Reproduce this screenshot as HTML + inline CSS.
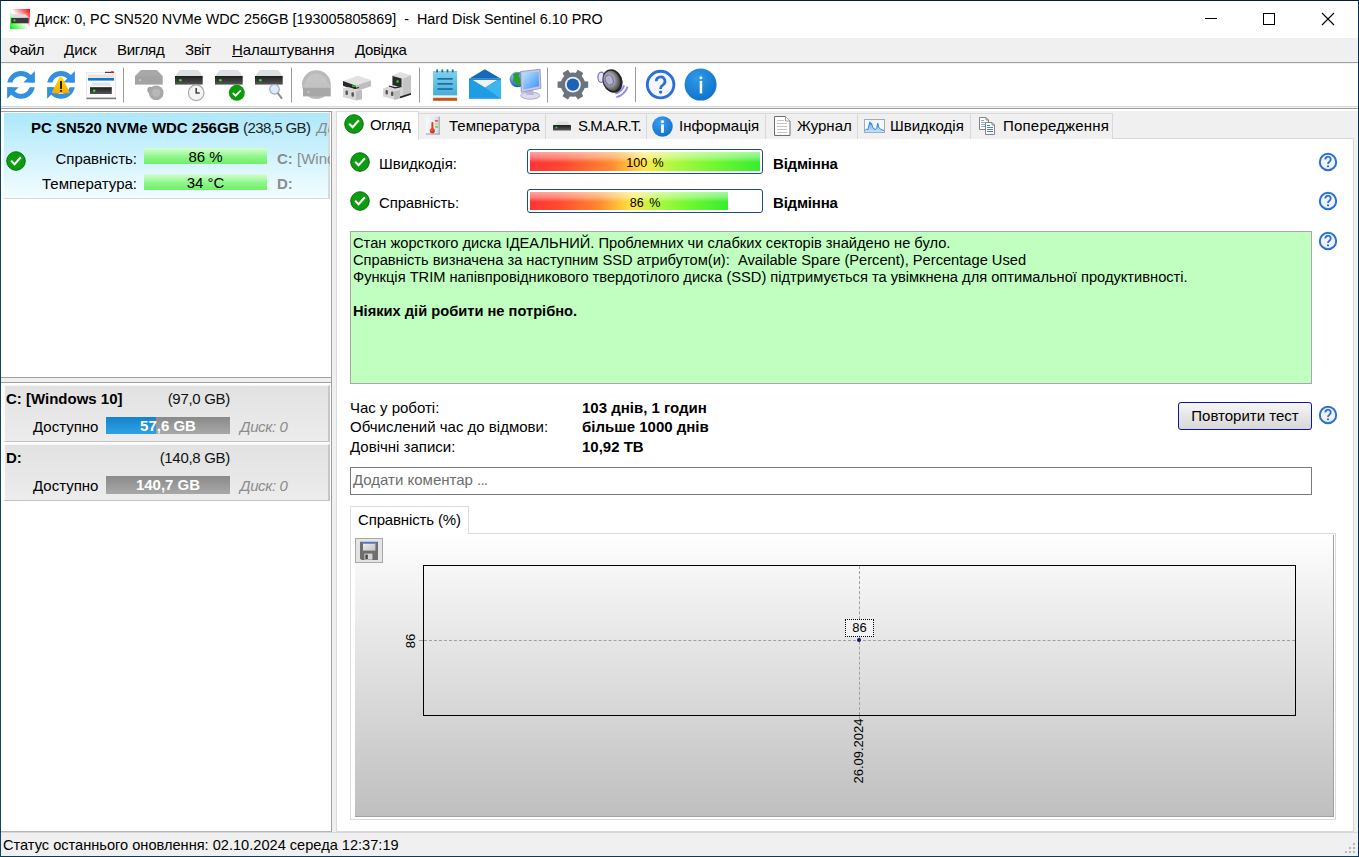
<!DOCTYPE html>
<html><head><meta charset="utf-8">
<style>
*{margin:0;padding:0;box-sizing:border-box}
html,body{width:1359px;height:857px;overflow:hidden;background:#f0f0f0}
body{position:relative;font-family:"Liberation Sans",sans-serif;font-size:15px;color:#000}
.a{position:absolute;white-space:pre;line-height:18px}
.b{font-weight:bold}
svg{position:absolute;overflow:visible}
</style></head><body>
<!-- title bar -->
<div class="a" style="left:1px;top:1px;width:1357px;height:37px;background:#fff"></div>
<div class="a" id="title" style="left:35px;top:10px;font-size:14.35px">Диск: 0, PC SN520 NVMe WDC 256GB [193005805869]  -  Hard Disk Sentinel 6.10 PRO</div>
<svg style="left:10px;top:9px" width="20" height="20" viewBox="0 0 20 20"><defs><linearGradient id="tg" x1="1" y1="0" x2="0" y2="1"><stop offset="0" stop-color="#ff0000"/><stop offset=".5" stop-color="#ffffff"/><stop offset="1" stop-color="#00f000"/></linearGradient></defs><rect width="20" height="20" fill="url(#tg)"/><path d="M4 5.2h11.5l3 3.6h-17.3z" fill="#dcdde0"/><rect x="1.2" y="8.9" width="17.5" height="5.4" fill="#3a3a3a"/><circle cx="4.5" cy="11.4" r="1.1" fill="#30e030"/></svg>
<div class="a" style="left:1205px;top:18px;width:12px;height:1px;background:#000"></div>
<div class="a" style="left:1263px;top:13px;width:12px;height:12px;border:1px solid #000"></div>
<svg style="left:1322px;top:13px" width="12" height="12" viewBox="0 0 12 12"><path d="M0 0L12 12M12 0L0 12" stroke="#000" stroke-width="1.1"/></svg>

<!-- menu -->
<div class="a" style="left:1px;top:38px;width:1357px;height:25px;background:#f0f0f0;border-bottom:1px solid #a0a0a0"></div>
<div class="a" style="left:9px;top:41px;letter-spacing:-0.45px">Файл</div>
<div class="a" style="left:64px;top:41px">Диск</div>
<div class="a" style="left:117px;top:41px;letter-spacing:-0.3px">Вигляд</div>
<div class="a" style="left:185px;top:41px;letter-spacing:-0.4px">Звіт</div>
<div class="a" style="left:232px;top:41px;letter-spacing:-0.1px"><u>Н</u>алаштування</div>
<div class="a" style="left:355px;top:41px;letter-spacing:-0.35px">Довідка</div>
<!-- toolbar -->
<div class="a" style="left:1px;top:64px;width:1357px;height:42px;background:#fff"></div>
<div class="a" style="left:1px;top:106px;width:1357px;height:5px;border-top:1px solid #d9d9d9;background:#fff"></div><div class="a" style="left:1px;top:107px;width:1357px;height:1px;background:#f0f0f0"></div><div class="a" style="left:1px;top:108px;width:1357px;height:1px;background:#a0a0a0"></div>

<svg style="left:0;top:0" width="1359" height="110" viewBox="0 0 1359 110"><defs>
<clipPath id="rc"><rect x="-2" y="-2" width="32" height="13.6"/><rect x="-2" y="16.2" width="32" height="14"/></clipPath>
<linearGradient id="dk" x1="0" y1="0" x2="0" y2="1"><stop offset="0" stop-color="#1e1e1e"/><stop offset="1" stop-color="#555"/></linearGradient>
<linearGradient id="wy" x1="0" y1="0" x2="0" y2="1"><stop offset="0" stop-color="#ffe000"/><stop offset="1" stop-color="#f5a800"/></linearGradient>
<linearGradient id="nb" x1="0" y1="0" x2="0" y2="1"><stop offset="0" stop-color="#7fd0f0"/><stop offset="1" stop-color="#44aedc"/></linearGradient>
<radialGradient id="gl" cx="0.35" cy="0.3" r="0.8"><stop offset="0" stop-color="#8fd0ff"/><stop offset="1" stop-color="#1040b0"/></radialGradient>
<linearGradient id="mn" x1="0" y1="0" x2="1" y2="1"><stop offset="0" stop-color="#bfe6ff"/><stop offset="1" stop-color="#3a90f0"/></linearGradient>
<radialGradient id="ib" cx="0.4" cy="0.3" r="0.8"><stop offset="0" stop-color="#2f9ae8"/><stop offset="1" stop-color="#0b6ec8"/></radialGradient>
<radialGradient id="sp" cx="0.4" cy="0.4" r="0.65"><stop offset="0" stop-color="#e8e8e8"/><stop offset="0.5" stop-color="#9a9a9a"/><stop offset="1" stop-color="#404040"/></radialGradient>
</defs><g transform="translate(7 71)"><circle cx="14" cy="13.9" r="11.45" stroke="#3190e0" stroke-width="4.9" fill="none" clip-path="url(#rc)"/><path d="M27.9 0V11.6H16.3z" fill="#3190e0"/><path d="M0.1 27.8V16.2H11.7z" fill="#3190e0"/></g><g transform="translate(47 71)"><circle cx="14" cy="13.9" r="11.45" stroke="#3190e0" stroke-width="4.9" fill="none" clip-path="url(#rc)"/><path d="M27.9 0V11.6H16.3z" fill="#3190e0"/><path d="M0.1 27.8V16.2H11.7z" fill="#3190e0"/></g><path d="M60.8 76.3c.5 0 .8.3 1.1.8l7.6 14.6c.4.8 0 1.6-.9 1.6h-15.6c-.9 0-1.3-.8-.9-1.6l7.6-14.6c.3-.5.6-.8 1.1-.8z" fill="url(#wy)"/><rect x="60.1" y="81" width="1.8" height="7.9" fill="#111"/><rect x="60.1" y="90.1" width="1.8" height="1.6" fill="#111"/><rect x="86.5" y="72.5" width="29" height="26" fill="#fbfbfb" stroke="#e4e4e4" stroke-width="0.8"/><rect x="86.5" y="97.6" width="29.5" height="1.6" fill="#7a7a7a"/><rect x="105" y="71.8" width="7" height="1.2" fill="#444"/><rect x="111" y="71.3" width="3" height="1.8" fill="#e02020"/><rect x="88" y="74.5" width="26" height="3.3" fill="#eae3dc"/><rect x="88" y="78" width="26" height="2.6" fill="#0a7ad8"/><path d="M92.5 82.8h17l1.5 2.9h-20z" fill="#e2e4e6"/><rect x="90" y="87.2" width="21.8" height="6.8" fill="url(#dk)"/><circle cx="94.2" cy="90.8" r="1.3" fill="#2fe02f"/><rect x="123" y="67.5" width="1" height="35" fill="#9a9a9a"/><path d="M141 70h15.8l5.9 6h-27.7z" fill="#a8a8a8"/><rect x="135" y="76" width="27.7" height="8.6" fill="#a3a3a3"/><circle cx="140" cy="80.2" r="1.1" fill="#c8c8c8"/><circle cx="150.5" cy="89.9" r="3.2" fill="#a0a0a0"/><circle cx="156.2" cy="92.8" r="7.4" fill="#a9a9a9"/><circle cx="156.2" cy="92.8" r="4" fill="#b8b8b8"/><path d="M179.8 70h18.2l4.7 6h-27.7z" fill="#dedfe2"/><rect x="175" y="76" width="27.7" height="8.6" fill="url(#dk)"/><circle cx="180.4" cy="80.2" r="1.3" fill="#2fe02f"/><circle cx="196.2" cy="92.8" r="7.8" fill="#f4f4f4" stroke="#a8a8a8" stroke-width="1.2"/><path d="M196.2 88v5h3.5" stroke="#444" stroke-width="1.6" fill="none"/><path d="M219.8 70h18.2l4.7 6h-27.7z" fill="#dedfe2"/><rect x="215" y="76" width="27.7" height="8.6" fill="url(#dk)"/><circle cx="220.4" cy="80.2" r="1.3" fill="#2fe02f"/><circle cx="236.8" cy="92.8" r="8" fill="#0a9a0a"/><path d="M232.8 93l2.8 2.7 5.3-5.3" stroke="#fff" stroke-width="1.8" fill="none"/><path d="M259.8 70h18.2l4.7 6h-27.7z" fill="#dedfe2"/><rect x="255" y="76" width="27.7" height="8.6" fill="url(#dk)"/><circle cx="260.4" cy="80.2" r="1.3" fill="#2fe02f"/><circle cx="274.5" cy="89.3" r="4.8" fill="#dcebff" stroke="#9ab" stroke-width="1.2"/><path d="M277.6 93l4.4 5.6" stroke="#8a8a8a" stroke-width="2"/><rect x="291" y="67.5" width="1" height="35" fill="#9a9a9a"/><circle cx="316.4" cy="84.6" r="14.4" fill="#b9b9b9"/><circle cx="316.4" cy="84.6" r="11" fill="#c4c4c4"/><path d="M306 81.8h21l3.8 6h-28.6z" fill="#c2c2c2"/><rect x="303" y="87.8" width="27.8" height="8.6" fill="#a7a7a7"/><circle cx="308.5" cy="92" r="1.1" fill="#c8c8c8"/><path d="M343 81l15-5.2 13 4.3v6l-15 5z" fill="#e2e2e2"/><path d="M343 81v4.8l13 5v-5z" fill="#2a2a2a"/><path d="M356 85.6l15-5v5.6l-15 5z" fill="#bdbdbd"/><rect x="352" y="85.4" width="4" height="1.4" fill="#2fd02f"/><path d="M343 88.5l6-1.6 13 3.5v9l-6 1-13-3.4z" fill="#d6d6d6"/><path d="M356 91.2l6-1.2v9l-6 1z" fill="#bdbdbd"/><rect x="345.5" y="90.6" width="2.4" height="4.5" rx="1" fill="#555"/><rect x="351.5" y="92.2" width="2.4" height="4.5" rx="1" fill="#555"/><path d="M349 86.5l6 2 4-1" stroke="#222" stroke-width="1.2" fill="none"/><path d="M392 75.5l8-3.5 11 3.3v19l-8 3.5-11-3.3z" fill="#e0e0e0"/><path d="M392 75.5l11 3.3v19l-11-3.3z" fill="#d4d4d4"/><path d="M392.5 76v9l9 2.5v-9z" fill="#2a2a2a"/><rect x="396.5" y="80.4" width="2.2" height="2.2" fill="#2fe02f"/><path d="M403 78.8l8-3.5v19l-8 3.5z" fill="#c4c4c4"/><path d="M383 88.5l6-2 11 3v8.5l-6 1.5-11-3z" fill="#d8d8d8"/><path d="M394 91.5l6-1.5v8.5l-6 1.5z" fill="#bdbdbd"/><rect x="385.5" y="90" width="2.4" height="4.5" rx="1" fill="#555"/><rect x="391" y="91.6" width="2.4" height="4.5" rx="1" fill="#555"/><path d="M400 96.5l11-3.5v1.8l-11 3.5z" fill="#222"/><path d="M389 86l6 1.8 5-1" stroke="#222" stroke-width="1.2" fill="none"/><rect x="419" y="67.5" width="1" height="35" fill="#9a9a9a"/><rect x="433.1" y="71" width="24" height="24.6" fill="url(#nb)"/><g fill="#1d6e96"><rect x="436.2" y="69.3" width="1.8" height="3.3" rx=".8"/><rect x="441.4" y="69.3" width="1.8" height="3.3" rx=".8"/><rect x="446.6" y="69.3" width="1.8" height="3.3" rx=".8"/><rect x="451.8" y="69.3" width="1.8" height="3.3" rx=".8"/><rect x="437.4" y="78" width="15.3" height="1.7"/><rect x="437.4" y="83" width="15.3" height="1.7"/><rect x="437.4" y="88.2" width="15.3" height="1.7"/></g><rect x="433.1" y="95.6" width="24" height="2" fill="#f2f2f2"/><rect x="433.1" y="97.8" width="24" height="3" fill="#c4581c"/><path d="M469 78.8l15.8-9.5 16.2 9.5z" fill="#1668b8"/><rect x="469" y="78.8" width="32" height="20" fill="#1f9ce2"/><path d="M485 87.4L501 78.8V98.8z" fill="#3cb6ef"/><path d="M472 79.5h26l-13 8z" fill="#f2f2f2"/><path d="M469 78.8h32v1.2h-32z" fill="#2a8ad0"/><circle cx="517.5" cy="79.5" r="7.8" fill="url(#gl)"/><path d="M513 74c2-1 4-1.5 6-1 1 1-1 2.5 0 4s3 1 3 3-2 3-2 5l-1.5 2c-1-2-1-3-2.5-4s-3 0-3-2 1-4 0-7z" fill="#2aa02a"/><ellipse cx="530.3" cy="95.6" rx="9.5" ry="3.6" fill="#dcdcf0" stroke="#9a9ac8" stroke-width=".8"/><path d="M527 89.5h6l1 5.5h-8z" fill="#b8b8d8"/><path d="M520.6 71.5l19.5-2.2 0.8 19-19.6 4z" fill="#c8c8ec" stroke="#8c8cc0" stroke-width=".8"/><path d="M522.8 73.3l15.8-1.8.6 14.8-15.8 3.3z" fill="url(#mn)"/><rect x="547" y="67.5" width="1" height="35" fill="#9a9a9a"/><path d="M583.98 81.17 L588.19 81.50 L588.19 87.70 L583.98 88.03 L581.41 92.48 L583.23 96.29 L577.86 99.39 L575.47 95.91 L570.33 95.91 L567.94 99.39 L562.57 96.29 L564.39 92.48 L561.82 88.03 L557.61 87.70 L557.61 81.50 L561.82 81.17 L564.39 76.72 L562.57 72.91 L567.94 69.81 L570.33 73.29 L575.47 73.29 L577.86 69.81 L583.23 72.91 L581.41 76.72z" fill="#6b737d" transform="rotate(0 572.9 84.6)"/><circle cx="572.9" cy="84.6" r="12.2" fill="#6b737d"/><circle cx="572.9" cy="84.6" r="7.9" fill="#f0f2f4"/><circle cx="572.9" cy="84.6" r="6.2" fill="#1a63b8"/><path d="M624.2 85.4A13 13 0 0 1 615.4 93.6M627.6 86.6A16.5 16.5 0 0 1 616.3 97.2" stroke="#8f88e6" stroke-width="1.8" fill="none"/><ellipse cx="601.3" cy="77.3" rx="3.4" ry="5.2" fill="#e4e4f4" stroke="#6e66cc" stroke-width="1.1"/><ellipse cx="612.5" cy="81" rx="9.8" ry="12" transform="rotate(-22 612.5 81)" fill="#262626"/><ellipse cx="611.8" cy="80.7" rx="8.2" ry="10.3" transform="rotate(-22 611.8 80.7)" fill="url(#sp)"/><ellipse cx="609.3" cy="80" rx="3.8" ry="5.2" transform="rotate(-22 609.3 80)" fill="#b4b4c2" stroke="#6a62c8" stroke-width="1"/><rect x="635" y="67" width="1" height="35" fill="#9a9a9a"/><circle cx="660.6" cy="84.6" r="13.3" fill="#f4f8fe" stroke="#2d6fd4" stroke-width="2.9"/><path d="M656.2 81.3a4.4 4.4 0 1 1 6.6 3.8c-1.6.9-2.2 1.6-2.2 3.4v.6" stroke="#2d6fd4" stroke-width="2.7" fill="none"/><circle cx="660.6" cy="92.1" r="1.7" fill="#2d6fd4"/><circle cx="700.6" cy="84.6" r="16" fill="url(#ib)"/><circle cx="700.9" cy="77.8" r="1.5" fill="#fff"/><rect x="699.7" y="80.9" width="2.5" height="12.5" fill="#fff"/></svg>
<!-- left panel -->
<div class="a" style="left:1px;top:111px;width:331px;height:267px;background:#fff;border-top:1px solid #a0a0a0;border-right:1px solid #a0a0a0;border-bottom:1px solid #a0a0a0"></div>
<div class="a" style="left:1px;top:382px;width:331px;height:450px;background:#fff;border-top:1px solid #a0a0a0;border-right:1px solid #a0a0a0;border-bottom:1px solid #b4b4b4"></div><div class="a" style="left:331px;top:378px;width:1px;height:4px;background:#a0a0a0"></div>


<!-- disk card -->
<div class="a" style="left:3px;top:112px;width:327px;height:87px;background:linear-gradient(#ace7fa,#c8f0fc 40%,#e6f9ff 80%,#f2fdff);border:1px solid #f4fdff;border-right:2px solid #cfdce2;border-bottom:1px solid #d8d8d8"></div>
<div class="a b" style="left:31px;top:119px">PC SN520 NVMe WDC 256GB</div>
<div class="a" style="left:243px;top:119px;color:#222;letter-spacing:-0.6px">(238,5 GB)</div>
<div class="a" style="left:0;top:112px;width:329px;height:30px;overflow:hidden"><div class="a" style="left:317px;top:7px;font-style:italic;color:#8c8c8c">Диск: 0</div></div>
<svg style="left:6px;top:151px" width="20" height="20" viewBox="0 0 20 20"><circle cx="10" cy="10" r="9.3" fill="#0c9c10" stroke="#056405" stroke-width="0.9"/><path d="M5.2 9.8l3.4 3.5 6.3-7" stroke="#fff" stroke-width="2.1" fill="none"/></svg>
<div class="a" style="left:0;top:150px;width:137px;text-align:right">Справність:</div>
<div class="a" style="left:144px;top:148px;width:123px;height:16px;background:linear-gradient(#d6ffd2,#8ef58a 55%,#6ff06a)"></div>
<div class="a" style="left:144px;top:148px;width:123px;text-align:center;line-height:17px">86 %</div>
<div class="a" style="left:0;top:142px;width:330px;height:50px;overflow:hidden"><div class="a b" style="left:277px;top:8px;color:#8c8c8c">C:<span style="font-weight:normal"> [Windows 10]</span></div><div class="a b" style="left:277px;top:33px;color:#8c8c8c">D:</div></div>
<div class="a" style="left:0;top:175px;width:137px;text-align:right">Температура:</div>
<div class="a" style="left:144px;top:174px;width:123px;height:16px;background:linear-gradient(#d6ffd2,#8ef58a 55%,#6ff06a)"></div>
<div class="a" style="left:144px;top:174px;width:123px;text-align:center;line-height:17px">34 °C</div>

<!-- volumes -->
<div class="a" style="left:3px;top:385px;width:327px;height:57px;background:linear-gradient(#e2e2e2,#ececec);border-left:2px solid #fbfbfb;border-top:1px solid #f6f6f6;border-right:2px solid #c6c6c6;border-bottom:1px solid #c4c4c4"></div>
<div class="a b" style="left:6px;top:390px">C: [Windows 10]</div>
<div class="a" style="left:100px;top:390px;width:130px;text-align:right;color:#111;letter-spacing:-0.3px">(97,0 GB)</div>
<div class="a" style="left:33px;top:418px">Доступно</div>
<div class="a" style="left:106px;top:417px;width:124px;height:17px;background:linear-gradient(#8a8a8a,#a8a8a8)"></div>
<div class="a" style="left:106px;top:417px;width:50px;height:17px;background:linear-gradient(#1684cc,#2ea2e4)"></div>
<div class="a b" style="left:106px;top:417px;width:124px;height:18px;text-align:center;color:#fff;line-height:18px">57,6 GB</div>
<div class="a" style="left:240px;top:418px;font-style:italic;color:#8c8c8c;letter-spacing:-0.4px">Диск: 0</div>

<div class="a" style="left:3px;top:444px;width:327px;height:57px;background:linear-gradient(#e2e2e2,#ececec);border-left:2px solid #fbfbfb;border-top:1px solid #f6f6f6;border-right:2px solid #c6c6c6;border-bottom:1px solid #c4c4c4"></div>
<div class="a b" style="left:6px;top:449px">D:</div>
<div class="a" style="left:100px;top:449px;width:130px;text-align:right;color:#111;letter-spacing:-0.3px">(140,8 GB)</div>
<div class="a" style="left:33px;top:477px">Доступно</div>
<div class="a" style="left:106px;top:476px;width:124px;height:18px;background:linear-gradient(#8a8a8a,#a8a8a8)"></div>
<div class="a b" style="left:106px;top:476px;width:124px;height:18px;text-align:center;color:#fff;line-height:18px">140,7 GB</div>
<div class="a" style="left:240px;top:477px;font-style:italic;color:#8c8c8c;letter-spacing:-0.4px">Диск: 0</div>

<!-- right panel -->
<div class="a" style="left:336px;top:138px;width:1018px;height:694px;background:#fff;border:1px solid #d9d9d9"></div>


<!-- tabs -->
<div class="a" style="left:418px;top:113px;width:128px;height:26px;background:#f0f0f0;border:1px solid #d9d9d9;border-bottom:none"></div>
<div class="a" style="left:546px;top:113px;width:101px;height:26px;background:#f0f0f0;border:1px solid #d9d9d9;border-left:none;border-bottom:none"></div>
<div class="a" style="left:647px;top:113px;width:119px;height:26px;background:#f0f0f0;border:1px solid #d9d9d9;border-left:none;border-bottom:none"></div>
<div class="a" style="left:766px;top:113px;width:92px;height:26px;background:#f0f0f0;border:1px solid #d9d9d9;border-left:none;border-bottom:none"></div>
<div class="a" style="left:858px;top:113px;width:113px;height:26px;background:#f0f0f0;border:1px solid #d9d9d9;border-left:none;border-bottom:none"></div>
<div class="a" style="left:971px;top:113px;width:142px;height:26px;background:#f0f0f0;border:1px solid #d9d9d9;border-left:none;border-bottom:none"></div>
<div class="a" style="left:336px;top:111px;width:83px;height:29px;background:#fff;border:1px solid #d9d9d9;border-bottom:none"></div>


<!-- tab labels -->
<svg style="left:344px;top:114px" width="20" height="20" viewBox="0 0 20 20"><circle cx="10" cy="10" r="9.3" fill="#0c9c10" stroke="#056405" stroke-width="0.9"/><path d="M5.2 9.8l3.4 3.5 6.3-7" stroke="#fff" stroke-width="2.1" fill="none"/></svg>
<div class="a" style="left:370px;top:116px;letter-spacing:-0.4px">Огляд</div>
<svg style="left:425px;top:116px" width="16" height="19" viewBox="0 0 16 19"><defs><linearGradient id="th" x1="0" x2="1"><stop offset="0" stop-color="#f6f9fc"/><stop offset=".6" stop-color="#e4ebf3"/><stop offset="1" stop-color="#d0d8e2"/></linearGradient><radialGradient id="bl" cx=".4" cy=".35" r=".7"><stop offset="0" stop-color="#ff6040"/><stop offset="1" stop-color="#c01008"/></radialGradient></defs><rect x="0.8" y="0.5" width="14" height="18" fill="url(#th)"/><rect x="13.6" y="0.8" width="1.3" height="17.8" fill="#a9b1be"/><rect x="0.8" y="17.4" width="14" height="1.2" fill="#a0a8b4"/><rect x="6.4" y="6" width="2" height="9" rx="1" fill="#f03a20"/><circle cx="7.3" cy="14.8" r="2.5" fill="url(#bl)"/><rect x="9.9" y="4" width="3.3" height="1.7" rx=".7" fill="#e25a5a"/><rect x="9.9" y="7" width="3.3" height="1.7" rx=".7" fill="#e2d84a"/><rect x="9.9" y="10.1" width="3.3" height="1.7" rx=".7" fill="#5ad85a"/></svg>
<div class="a" style="left:449px;top:117px">Температура</div>
<svg style="left:553px;top:121px" width="18" height="10" viewBox="0 0 18 10"><defs><linearGradient id="sd" x1="0" y1="0" x2="0" y2="1"><stop offset="0" stop-color="#1e1e1e"/><stop offset="1" stop-color="#5a5a5a"/></linearGradient></defs><path d="M5.5 0.4h8.5l3.6 3.8h-17.4z" fill="#dedfe2"/><rect x="0" y="4.1" width="18" height="5.5" rx=".6" fill="url(#sd)"/><circle cx="3.4" cy="6.4" r=".9" fill="#30e030"/></svg>
<div class="a" style="left:578px;top:117px;letter-spacing:-0.9px">S.M.A.R.T.</div>
<svg style="left:652px;top:116px" width="21" height="21" viewBox="0 0 20 20"><defs><radialGradient id="ig" cx="0.4" cy="0.3" r="0.8"><stop offset="0" stop-color="#3aa0f0"/><stop offset="1" stop-color="#0c6cc8"/></radialGradient></defs><circle cx="10" cy="10" r="9.8" fill="url(#ig)"/><circle cx="10" cy="5.3" r="1.5" fill="#fff"/><rect x="8.7" y="8" width="2.6" height="8" fill="#fff"/></svg>
<div class="a" style="left:679px;top:117px">Інформація</div>
<svg style="left:774px;top:116px" width="17" height="20" viewBox="0 0 17 20"><path d="M0.5 0.5h11l4.5 4.5v14.5h-15.5z" fill="#fff" stroke="#6e6e6e" stroke-width="1"/><path d="M11.5 0.5v4.5h4.5" fill="#f4f4f4" stroke="#8a8a8a" stroke-width="0.8"/><path d="M3 4.5h7M3 7.5h10M3 10.5h10M3 13.5h10M3 16.5h10" stroke="#c4c4c4" stroke-width="1"/></svg>
<div class="a" style="left:797px;top:117px">Журнал</div>
<svg style="left:864px;top:119px" width="21" height="14" viewBox="0 0 21 14"><defs><linearGradient id="pa" x1="0" y1="0" x2="0" y2="1"><stop offset="0" stop-color="#5ab0f4"/><stop offset="1" stop-color="#c4e4fa"/></linearGradient></defs><rect x="0.5" y="0.5" width="20" height="13" fill="#f4f8fb" stroke="#a0acb8"/><path d="M1 11.5 2.5 10 4 10.5 5 6 5.8 2.8 6.8 5.5 7.6 4.2 8.6 8 10 10 11.5 10.5 12.8 8.5 13.8 4.2 14.8 8.5 16.5 10 18 10.8 20 11.5V13H1z" fill="url(#pa)"/><path d="M1 11.5 2.5 10 4 10.5 5 6 5.8 2.8 6.8 5.5 7.6 4.2 8.6 8 10 10 11.5 10.5 12.8 8.5 13.8 4.2 14.8 8.5 16.5 10 18 10.8 20 11.5" stroke="#2a7ad6" stroke-width="0.9" fill="none"/></svg>
<div class="a" style="left:890px;top:117px">Швидкодія</div>
<svg style="left:979px;top:117px" width="17" height="18" viewBox="0 0 17 18"><path d="M0.5 0.5h6.5l2.5 2.5v9.5h-9z" fill="#fff" stroke="#858585" stroke-width="1"/><path d="M7 0.5v2.5h2.5" fill="none" stroke="#858585" stroke-width="1"/><path d="M2 3.5h3M2 5.5h5.5M2 7.5h5.5M2 9.5h5.5" stroke="#86a6ea" stroke-width="1"/><path d="M6.5 5.5h6.5l2.5 2.5v9.5h-9z" fill="#fff" stroke="#858585" stroke-width="1"/><path d="M13 5.5v2.5h2.5" fill="none" stroke="#858585" stroke-width="1"/><path d="M8 8.5h3M8 10.5h6M8 12.5h6M8 14.5h6" stroke="#3f7de2" stroke-width="1"/></svg>
<div class="a" style="left:1003px;top:117px;letter-spacing:0.2px">Попередження</div>


<!-- health rows -->
<svg style="left:350px;top:152px" width="20" height="20" viewBox="0 0 20 20"><circle cx="10" cy="10" r="9.3" fill="#0c9c10" stroke="#056405" stroke-width="0.9"/><path d="M5.2 9.8l3.4 3.5 6.3-7" stroke="#fff" stroke-width="2.1" fill="none"/></svg>
<div class="a" style="left:379px;top:155px">Швидкодія:</div>
<div class="a" style="left:527px;top:149px;width:236px;height:25px;border:1px solid #1e4a88;border-radius:3px;background:#fff"></div>
<div class="a" style="left:530px;top:152px;width:230px;height:19px;background:linear-gradient(90deg,#ff3434 0%,#ff4a30 15%,#ff8a30 35%,#ffe840 50%,#b0f840 62%,#70f830 80%,#38ec30 100%)"></div>
<div class="a" style="left:530px;top:152px;width:230px;height:19px;background:linear-gradient(rgba(255,255,255,.55),rgba(255,255,255,.35) 30%,rgba(255,255,255,0) 55%)"></div>
<div class="a" style="left:527px;top:154px;width:236px;text-align:center;font-size:12.5px;word-spacing:2px">100 %</div>
<div class="a b" style="left:773px;top:155px;letter-spacing:-0.2px">Відмінна</div>
<svg style="left:1318px;top:152px" width="20" height="20" viewBox="0 0 20 20"><circle cx="10" cy="10" r="8.2" fill="#f0f4fa" stroke="#2c6fd8" stroke-width="2"/><path d="M7.3 7.4a2.7 2.7 0 1 1 4.1 2.3c-.9.6-1.4 1.1-1.4 2.3" stroke="#2c6fd8" stroke-width="1.9" fill="none"/><circle cx="10" cy="14.3" r="1.15" fill="#2c6fd8"/></svg>

<svg style="left:350px;top:191px" width="20" height="20" viewBox="0 0 20 20"><circle cx="10" cy="10" r="9.3" fill="#0c9c10" stroke="#056405" stroke-width="0.9"/><path d="M5.2 9.8l3.4 3.5 6.3-7" stroke="#fff" stroke-width="2.1" fill="none"/></svg>
<div class="a" style="left:379px;top:194px;letter-spacing:-0.15px">Справність:</div>
<div class="a" style="left:527px;top:189px;width:236px;height:24px;border:1px solid #1e4a88;border-radius:3px;background:#fff"></div>
<div class="a" style="left:530px;top:192px;width:198px;height:18px;background:linear-gradient(90deg,#ff3434 0%,#ff4a30 15%,#ff8a30 35%,#ffe840 52%,#b0f840 64%,#70f830 80%,#38ec30 100%)"></div>
<div class="a" style="left:530px;top:192px;width:198px;height:18px;background:linear-gradient(rgba(255,255,255,.55),rgba(255,255,255,.35) 30%,rgba(255,255,255,0) 55%)"></div>
<div class="a" style="left:527px;top:194px;width:236px;text-align:center;font-size:12.5px;word-spacing:2px">86 %</div>
<div class="a b" style="left:773px;top:194px;letter-spacing:-0.2px">Відмінна</div>
<svg style="left:1318px;top:191px" width="20" height="20" viewBox="0 0 20 20"><circle cx="10" cy="10" r="8.2" fill="#f0f4fa" stroke="#2c6fd8" stroke-width="2"/><path d="M7.3 7.4a2.7 2.7 0 1 1 4.1 2.3c-.9.6-1.4 1.1-1.4 2.3" stroke="#2c6fd8" stroke-width="1.9" fill="none"/><circle cx="10" cy="14.3" r="1.15" fill="#2c6fd8"/></svg>

<!-- message box -->
<div class="a" style="left:350px;top:231px;width:962px;height:153px;background:#c0ffc0;border:1px solid #a8a8a8"></div>
<div class="a" style="left:353px;top:235px;font-size:14.67px;line-height:17px">Стан жорсткого диска ІДЕАЛЬНИЙ. Проблемних чи слабких секторів знайдено не було.
Справність визначена за наступним SSD атрибутом(и):  Available Spare (Percent), Percentage Used
Функція TRIM напівпровідникового твердотілого диска (SSD) підтримується та увімкнена для оптимальної продуктивності.

<b>Ніяких дій робити не потрібно.</b></div>
<svg style="left:1318px;top:231px" width="20" height="20" viewBox="0 0 20 20"><circle cx="10" cy="10" r="8.2" fill="#f0f4fa" stroke="#2c6fd8" stroke-width="2"/><path d="M7.3 7.4a2.7 2.7 0 1 1 4.1 2.3c-.9.6-1.4 1.1-1.4 2.3" stroke="#2c6fd8" stroke-width="1.9" fill="none"/><circle cx="10" cy="14.3" r="1.15" fill="#2c6fd8"/></svg>

<!-- info rows -->
<div class="a" style="left:350px;top:398px;line-height:19.25px">Час у роботі:
Обчислений час до відмови:
Довічні записи:</div>
<div class="a b" style="left:582px;top:398px;line-height:19.25px">103 днів, 1 годин
більше 1000 днів
10,92 TB</div>
<div class="a" style="left:1178px;top:402px;width:134px;height:28px;border:1px solid #0a1a8a;border-radius:3px;background:linear-gradient(#f6f6f6,#e6e6e6 50%,#d8d8d8)"></div>
<div class="a" style="left:1178px;top:407px;width:134px;text-align:center">Повторити тест</div>
<svg style="left:1318px;top:405px" width="20" height="20" viewBox="0 0 20 20"><circle cx="10" cy="10" r="8.2" fill="#f0f4fa" stroke="#2c6fd8" stroke-width="2"/><path d="M7.3 7.4a2.7 2.7 0 1 1 4.1 2.3c-.9.6-1.4 1.1-1.4 2.3" stroke="#2c6fd8" stroke-width="1.9" fill="none"/><circle cx="10" cy="14.3" r="1.15" fill="#2c6fd8"/></svg>

<!-- comment -->
<div class="a" style="left:350px;top:467px;width:962px;height:28px;border:1px solid #7a7a7a;background:#fff"></div>
<div class="a" style="left:353px;top:471px;color:#6d6d6d">Додати коментар <span style="letter-spacing:-0.8px">...</span></div>

<!-- chart tab -->
<div class="a" style="left:350px;top:533px;width:986px;height:287px;border:1px solid #dcdcdc;background:#fff"></div>
<div class="a" style="left:350px;top:506px;width:119px;height:28px;border:1px solid #dcdcdc;border-bottom:none;background:#fff"></div>
<div class="a" style="left:358px;top:511px;letter-spacing:-0.15px">Справність (%)</div>
<div class="a" style="left:355px;top:535px;width:979px;height:282px;background:linear-gradient(#fefefe,#bfbfbf);border-right:1px solid #a0a0a0;border-bottom:1px solid #a0a0a0"></div>


<!-- chart -->
<div class="a" style="left:423px;top:565px;width:873px;height:151px;border:1px solid #000"></div>
<div class="a" style="left:424px;top:640px;width:871px;height:0;border-top:1px dashed #a0a0a0"></div>
<div class="a" style="left:859px;top:566px;width:0;height:149px;border-left:1px dashed #a0a0a0"></div>
<div class="a" style="left:859px;top:716px;width:0;height:4px;border-left:1px dashed #a0a0a0"></div>
<div class="a" style="left:845px;top:619px;width:29px;height:18px;border:1px dotted #000;background:#f2f2f2"></div>
<div class="a" style="left:845px;top:619px;width:29px;text-align:center;font-size:13px;line-height:17px">86</div>
<div class="a" style="left:857px;top:638px;width:4px;height:4px;background:#101070;border-radius:2px"></div>
<div class="a" style="left:403px;top:633px;width:16px;height:16px;font-size:13px;line-height:16px;transform:rotate(-90deg);text-align:center">86</div><div class="a" style="left:419px;top:640px;width:4px;height:1px;background:#a0a0a0"></div>
<div class="a" style="left:820px;top:743px;width:78px;height:16px;font-size:13px;line-height:16px;transform:rotate(-90deg);text-align:center">26.09.2024</div>
<svg style="left:355px;top:538px" width="28" height="25" viewBox="0 0 28 25"><defs><linearGradient id="fl" x1="0" y1="0" x2="1" y2="1"><stop offset="0" stop-color="#f2f2f2"/><stop offset="1" stop-color="#c4c4c4"/></linearGradient></defs><rect x="0.5" y="0.5" width="27" height="24" fill="#e4e4e4" stroke="#a8a8a8"/><path d="M5 3.7h18v18.4h-16.5l-1.5-1.5z" fill="#6e6e6e"/><rect x="8" y="4.2" width="12.4" height="8.4" fill="url(#fl)"/><rect x="8" y="4.2" width="12.4" height="1.4" fill="#2a5cc8"/><rect x="9.4" y="15.6" width="8" height="6" fill="#d4d4d4"/><rect x="10.4" y="16.6" width="2.4" height="4.4" fill="#454545"/></svg>

<!-- status bar -->
<div class="a" style="left:1px;top:832px;width:1357px;height:24px;background:#f0f0f0;border-top:1px solid #d7d7d7"></div>
<div class="a" style="left:3px;top:836px;font-size:14.6px">Статус останнього оновлення: 02.10.2024 середа 12:37:19</div>
<svg style="left:1345px;top:843px" width="12" height="12" viewBox="0 0 12 12"><g fill="#b8b8b8"><rect x="8" y="0" width="2" height="2"/><rect x="4" y="4" width="2" height="2"/><rect x="8" y="4" width="2" height="2"/><rect x="0" y="8" width="2" height="2"/><rect x="4" y="8" width="2" height="2"/><rect x="8" y="8" width="2" height="2"/></g></svg>
<div class="a" style="left:0;top:0;width:1359px;height:857px;border:1px solid #0b2b52;border-top-color:#021d36;border-left-color:#0d4565;border-bottom-color:#0c3a58"></div>
</body></html>
